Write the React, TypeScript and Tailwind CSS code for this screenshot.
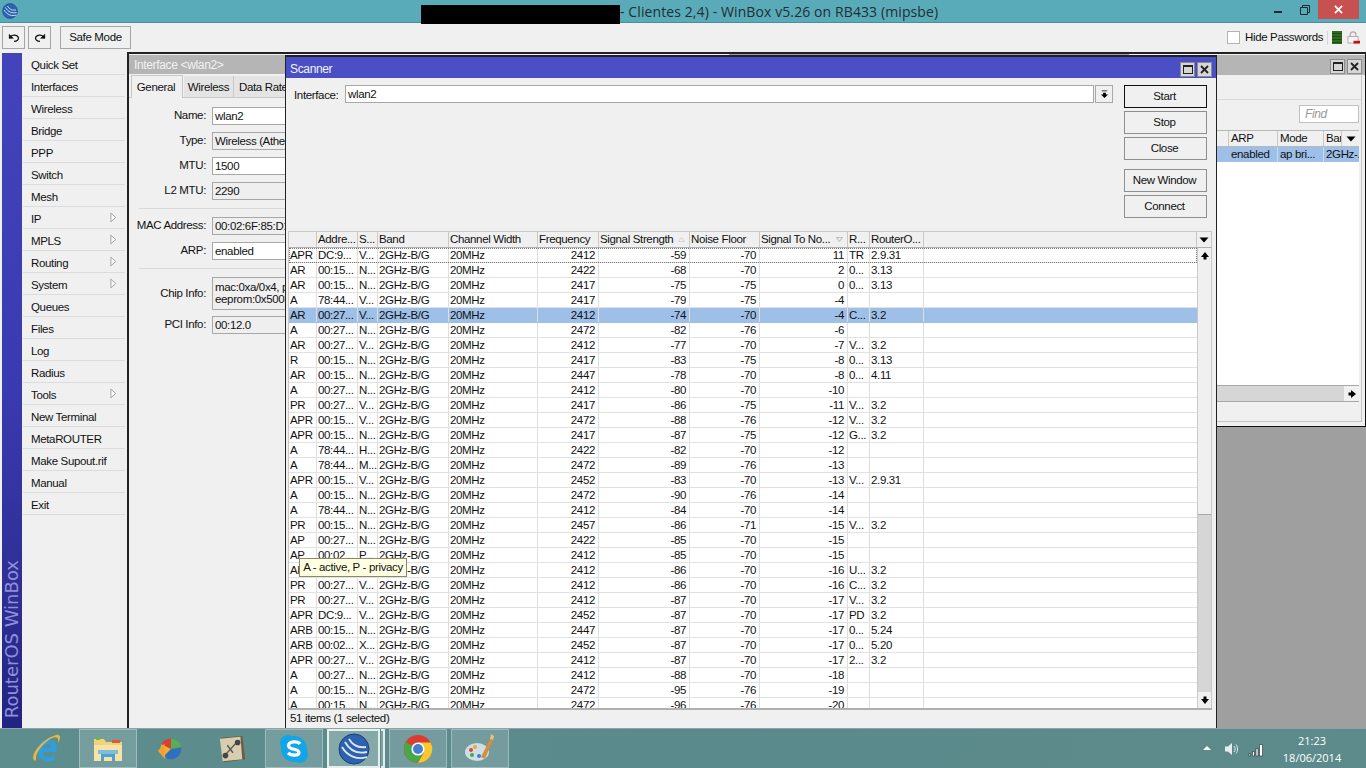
import React from "react";

const menu: [string, boolean][] = [
  ["Quick Set", false], ["Interfaces", false], ["Wireless", false], ["Bridge", false], ["PPP", false], ["Switch", false], ["Mesh", false], ["IP", true], ["MPLS", true], ["Routing", true], ["System", true], ["Queues", false], ["Files", false], ["Log", false], ["Radius", false], ["Tools", true], ["New Terminal", false], ["MetaROUTER", false], ["Make Supout.rif", false], ["Manual", false], ["Exit", false],
];

const rows: string[][] = [
  ["APR", "DC:9...", "V...", "2412", "-59", "-70", "11", "TR", "2.9.31"],
  ["AR", "00:15...", "N...", "2422", "-68", "-70", "2", "0...", "3.13"],
  ["AR", "00:15...", "N...", "2417", "-75", "-75", "0", "0...", "3.13"],
  ["A", "78:44...", "V...", "2417", "-79", "-75", "-4", "", ""],
  ["AR", "00:27...", "V...", "2412", "-74", "-70", "-4", "C...", "3.2"],
  ["A", "00:27...", "N...", "2472", "-82", "-76", "-6", "", ""],
  ["AR", "00:27...", "V...", "2412", "-77", "-70", "-7", "V...", "3.2"],
  ["R", "00:15...", "N...", "2417", "-83", "-75", "-8", "0...", "3.13"],
  ["AR", "00:15...", "N...", "2447", "-78", "-70", "-8", "0...", "4.11"],
  ["A", "00:27...", "N...", "2412", "-80", "-70", "-10", "", ""],
  ["PR", "00:27...", "V...", "2417", "-86", "-75", "-11", "V...", "3.2"],
  ["APR", "00:15...", "V...", "2472", "-88", "-76", "-12", "V...", "3.2"],
  ["APR", "00:15...", "N...", "2417", "-87", "-75", "-12", "G...", "3.2"],
  ["A", "78:44...", "H...", "2422", "-82", "-70", "-12", "", ""],
  ["A", "78:44...", "M...", "2472", "-89", "-76", "-13", "", ""],
  ["APR", "00:15...", "V...", "2452", "-83", "-70", "-13", "V...", "2.9.31"],
  ["A", "00:15...", "N...", "2472", "-90", "-76", "-14", "", ""],
  ["A", "78:44...", "N...", "2412", "-84", "-70", "-14", "", ""],
  ["PR", "00:15...", "N...", "2457", "-86", "-71", "-15", "V...", "3.2"],
  ["AP", "00:27...", "N...", "2422", "-85", "-70", "-15", "", ""],
  ["AP", "00:02...", "P...", "2412", "-85", "-70", "-15", "", ""],
  ["AR", "00:27...", "V...", "2412", "-86", "-70", "-16", "U...", "3.2"],
  ["PR", "00:27...", "V...", "2412", "-86", "-70", "-16", "C...", "3.2"],
  ["PR", "00:27...", "V...", "2412", "-87", "-70", "-17", "V...", "3.2"],
  ["APR", "DC:9...", "V...", "2452", "-87", "-70", "-17", "PD", "3.2"],
  ["ARB", "00:15...", "N...", "2447", "-87", "-70", "-17", "0...", "5.24"],
  ["ARB", "00:02...", "X...", "2452", "-87", "-70", "-17", "0...", "5.20"],
  ["APR", "00:27...", "V...", "2412", "-87", "-70", "-17", "2...", "3.2"],
  ["A", "00:27...", "N...", "2412", "-88", "-70", "-18", "", ""],
  ["A", "00:15...", "N...", "2472", "-95", "-76", "-19", "", ""],
  ["A", "00:15...", "N...", "2472", "-96", "-76", "-20", "", ""],
];

function Cell({ w, right, head, children }: { w: string; right?: boolean; head?: boolean; children?: React.ReactNode }) {
  return (
    <div className={`${w} shrink-0 h-full overflow-hidden whitespace-nowrap pl-[1px] pr-[3px] border-r ${head ? "border-[#c8c8c8] leading-[15px]" : "border-[#dedede] leading-[14px]"} ${right ? "text-right" : ""}`}>
      {children}
    </div>
  );
}

function Row({ r, i }: { r: string[]; i: number }) {
  const sel = i === 4;
  return (
    <div className={`flex h-[15px] shrink-0 border-b ${sel ? "bg-[#9dbfe8] border-[#9dbfe8]" : "bg-white border-[#e2e2e2]"} ${i === 0 ? "outline-1 outline-dotted outline-[#777] -outline-offset-1" : ""}`}>
      <Cell w="w-[28px]">{r[0]}</Cell>
      <Cell w="w-[41px]">{r[1]}</Cell>
      <Cell w="w-[20px]">{r[2]}</Cell>
      <Cell w="w-[71px]">2GHz-B/G</Cell>
      <Cell w="w-[89px]">20MHz</Cell>
      <Cell w="w-[61px]" right>{r[3]}</Cell>
      <Cell w="w-[91px]" right>{r[4]}</Cell>
      <Cell w="w-[70px]" right>{r[5]}</Cell>
      <Cell w="w-[88px]" right>{r[6]}</Cell>
      <Cell w="w-[22px]">{r[7]}</Cell>
      <Cell w="w-[54px]">{r[8]}</Cell>
      <div className="flex-1" />
    </div>
  );
}

function Tri({ dir, className }: { dir: "up" | "down" | "right" | "solid"; className?: string }) {
  const p =
    dir === "up" ? "M5 1 9 6H6.5V8.5H3.5V6H1Z"
    : dir === "down" ? "M3.5 1.5H6.5V4H9L5 9 1 4H3.5Z"
    : dir === "solid" ? "M.5 2.5H9.500L5 7.500Z"
    : "M1.5 3.5H4V1L9 5 4 9V6.5H1.5Z";
  return <svg viewBox="0 0 10 10" className={`w-[10px] h-[10px] ${className ?? ""}`}><path d={p} fill="#000" /></svg>;
}

function WinButtons() {
  return (
    <div className="flex gap-[2px] items-center">
      <div className="w-[15px] h-[15px] bg-[#d6d6d6] border border-[#8c8c8c] flex items-center justify-center"><div className="w-[10px] h-[9px] border border-[#222] border-t-2" /></div>
      <div className="w-[15px] h-[15px] bg-[#d6d6d6] border border-[#8c8c8c] flex items-center justify-center">
        <svg viewBox="0 0 9 9" className="w-[9px] h-[9px]"><path d="M1 1 8 8M8 1 1 8" stroke="#222" strokeWidth="1.8" /></svg>
      </div>
    </div>
  );
}

function Btn({ label, active, className }: { label: string; active?: boolean; className?: string }) {
  return (
    <div className={`w-[83px] h-[23px] flex items-center justify-center pt-px pr-[2px] bg-[#f0f0f0] border ${active ? "border-[#111]" : "border-[#8f8f8f]"} ${className ?? ""}`}>{label}</div>
  );
}

function Field({ label, value, h, grey, lines }: { label: string; value?: string; h?: string; grey?: boolean; lines?: string[] }) {
  return (
    <div className={`flex items-center ${h ?? "h-[18px]"}`}>
      <div className="w-[77px] text-right pr-[6px] whitespace-nowrap">{label}</div>
      <div className={`flex-1 h-full border border-[#a8a8a8] px-[2px] overflow-hidden whitespace-nowrap ${grey ? "bg-[#efefef]" : "bg-white"} leading-[16px]`}>
        {lines ? lines.map((l) => <div key={l} className="leading-[12px] first:mt-[3px]">{l}</div>) : value}
      </div>
    </div>
  );
}

function Arrow() {
  return <svg viewBox="0 0 8 12" className="absolute right-[8px] top-[5px] w-[7px] h-[11px]"><path d="M1 1 6.5 6 1 11Z" fill="#fafafa" stroke="#9a9a9a" /></svg>;
}

function TaskSlot({ boxed, children }: { boxed?: boolean; children: React.ReactNode }) {
  return (
    <div className={`w-[58px] h-[39px] flex items-center justify-center ${boxed ? "bg-white/15 border border-white/30" : ""}`}>
      {children}
    </div>
  );
}

function WinboxLogo({ size }: { size: number }) {
  return (
    <svg viewBox="0 0 32 32" width={size} height={size}>
      <circle cx="16" cy="16" r="15" fill="#2c62b0" stroke="#1d3f78" />
      <path d="M4 14C10 24 20 27 29 24M7 9C12 18 20 21 29 19M11 6C15 13 21 15 28 14" fill="none" stroke="#dfe9f6" strokeWidth="1.8" />
    </svg>
  );
}

export default function App() {
  return (
    <div className="w-[1366px] h-[768px] overflow-hidden flex flex-col font-['Liberation_Sans',Arial,sans-serif] text-[11.5px] tracking-[-0.35px] text-[#111] bg-[#f0f0f0]">
      {/* Title bar */}
      <div className="h-[23px] shrink-0 bg-[#5aabb9] border-b border-[#4a8e99] flex items-center relative">
        <div className="ml-[2px] w-[16px] h-[16px]"><WinboxLogo size={16} /></div>
        <div className="absolute left-[421px] top-[5px] w-[199px] h-[19px] bg-black" />
        <div className="absolute left-[620px] top-[2px] text-[14px] leading-[20px] tracking-[0.1px] font-['Open_Sans',sans-serif] text-[#1d2f33] whitespace-nowrap">- Clientes 2,4) - WinBox v5.26 on RB433 (mipsbe)</div>
        <div className="absolute left-[1274px] top-[11px] w-[8px] h-[2px] bg-[#1a2c30]" />
        <svg viewBox="0 0 10 10" className="absolute left-[1300px] top-[5px] w-[10px] h-[10px]"><path d="M2.5 2.5V.5H9.5V7.5H7.5M.5 2.5H7.5V9.5H.5Z" fill="none" stroke="#1a2c30" /></svg>
        <div className="absolute left-[1318px] top-0 w-[41px] h-[19px] bg-[#c75050] flex items-center justify-center">
          <svg viewBox="0 0 10 10" className="w-[9px] h-[9px]"><path d="M1 1 9 9M9 1 1 9" stroke="#fff" strokeWidth="2" /></svg>
        </div>
      </div>

      {/* Toolbar */}
      <div className="h-[29px] shrink-0 flex items-center pl-[2px] pr-[6px] bg-[#f0f0f0]">
        <div className="w-[23px] h-[23px] border border-[#a6a6a6] flex items-center justify-center">
          <svg viewBox="0 0 14 11" className="w-[12px] h-[10px]"><path d="M1 .5V6.500L7 6Z" fill="#111" /><path d="M3 4C5 1.500 10 1.500 12 4.500C13 7 10.500 9.500 7 9.500" fill="none" stroke="#111" strokeWidth="1.5" /></svg>
        </div>
        <div className="w-[23px] h-[23px] ml-[3px] border border-[#a6a6a6] flex items-center justify-center">
          <svg viewBox="0 0 14 11" className="w-[12px] h-[10px] -scale-x-100"><path d="M1 .5V6.500L7 6Z" fill="#111" /><path d="M3 4C5 1.500 10 1.500 12 4.500C13 7 10.500 9.500 7 9.500" fill="none" stroke="#111" strokeWidth="1.5" /></svg>
        </div>
        <div className="w-[71px] h-[23px] ml-[9px] border border-[#a6a6a6] flex items-center justify-center">Safe Mode</div>
        <div className="flex-1" />
        <div className="w-[13px] h-[13px] bg-white border border-[#b4b4b4] mr-[5px]" />
        <div className="whitespace-nowrap w-[77px]">Hide Passwords</div>
        <div className="w-px h-[14px] bg-[#d8d8d8] ml-[5px] mr-[4px]" />
        <div className="w-[10px] h-[13px] bg-[repeating-linear-gradient(#2f6b1e_0_2px,#1f4d14_2px_3px)] mr-[5px]" />
        <svg viewBox="0 0 14 15" className="w-[13px] h-[15px]"><path d="M3.5 7V4C3.5 .5 9.5 .5 9.5 4V7" fill="none" stroke="#aaa" strokeWidth="1.3" /><rect x="1" y="6.5" width="11" height="7" fill="#f4f4f4" stroke="#aaa" /><rect x="7" y="11" width="7" height="3" fill="#c81010" /></svg>
      </div>

      {/* Main */}
      <div className="flex-1 flex min-h-0">
        <div className="w-[127px] shrink-0 flex pl-[2px] pt-px">
          <div className="w-[20px] h-full bg-[linear-gradient(#4343bb,#3a3ab0_50%,#2c2c90_85%,#232382)] flex flex-col justify-end items-center overflow-hidden">
            <div className="[writing-mode:vertical-rl] rotate-180 font-['DejaVu_Sans',sans-serif] text-[18px] tracking-normal leading-[20px] text-[#9090da] whitespace-nowrap pt-[10px]">RouterOS WinBox</div>
          </div>
          <div className="w-[102px] ml-px">
            {menu.map(([m, a]) => (
              <div key={m} className="relative h-[22px] border-b border-[#dcdcdc] pl-[8px] pt-[2px] leading-[20px] whitespace-nowrap">
                {m}
                {a && <Arrow />}
              </div>
            ))}
          </div>
        </div>

        <div className="relative flex-1 bg-[#9f9f9f] border-l-2 border-t-2 border-[#222]">
          {/* Interface list window (behind) */}
          <div className="absolute left-[1000px] top-0 right-0 h-[373px] bg-[#f0f0f0] border-r border-b border-[#111] pt-px flex flex-col">
            <div className="h-[20px] bg-[#b5b5b5] flex items-center justify-end pr-[3px] pt-[2px] shrink-0"><WinButtons /></div>
            <div className="flex-1 min-h-0 flex flex-col mr-[3px] mb-[4px] border-r border-b border-[#c4c4c4]">
              <div className="h-[25px] shrink-0 border-b border-[#d8d8d8]" />
              <div className="h-[30px] shrink-0 flex justify-end items-start pr-[2px] pt-[5px]">
                <div className="w-[60px] h-[18px] bg-white border border-[#c0c0c0] italic text-[#9a9a9a] px-[5px] text-[12px] leading-[16px]">Find</div>
              </div>
              <div className="ml-[3px] mr-[2px] flex-1 flex flex-col bg-white min-h-0">
                <div className="h-[17px] shrink-0 flex bg-[#f0f0f0] border-y border-[#b8b8b8]">
                  <div className="w-[97px] shrink-0 border-r border-[#c8c8c8]" />
                  <Cell w="w-[49px]" head><span className="ml-px">ARP</span></Cell>
                  <Cell w="w-[46px]" head><span className="ml-px">Mode</span></Cell>
                  <Cell w="w-[18px]" head><span className="ml-px">Bar</span></Cell>
                  <div className="flex-1 flex items-center justify-center"><Tri dir="solid" /></div>
                </div>
                <div className="h-[15px] shrink-0 flex bg-[#9dbfe8] leading-[14px]">
                  <div className="w-[97px] shrink-0" />
                  <div className="w-[49px] shrink-0 pl-[2px] border-r border-[#c9dbf2]">enabled</div>
                  <div className="w-[46px] shrink-0 pl-[2px] border-r border-[#c9dbf2] whitespace-nowrap">ap bri...</div>
                  <div className="flex-1 pl-[2px] overflow-hidden whitespace-nowrap">2GHz-.</div>
                </div>
                <div className="flex-1" />
                <div className="h-[17px] shrink-0 flex justify-end bg-[#d6d6d6] border-y border-[#a8a8a8]">
                  <div className="w-[15px] bg-[#f0f0f0] flex items-center justify-center"><Tri dir="right" /></div>
                </div>
              </div>
              <div className="h-[19px] shrink-0" />
            </div>
          </div>

          {/* Interface <wlan2> window */}
          <div className="absolute left-0 top-0 w-[600px] bottom-0 bg-[#f0f0f0] pt-px">
            <div className="h-[19px] bg-[#b5b5b5] text-[#f2f2f2] pl-[5px] leading-[20px] text-[12px]">Interface &lt;wlan2&gt;</div>
            <div className="flex h-[24px] pl-[2px] items-end border-b border-[#c8c8c8]">
              <div className="w-[52px] h-[23px] bg-[#f0f0f0] border border-[#c8c8c8] border-b-0 text-center pr-[2px] leading-[23px] -mb-px">General</div>
              <div className="w-[50px] ml-px h-[21px] bg-[#e4e4e4] border-r border-[#c8c8c8] text-center leading-[23px]">Wireless</div>
              <div className="w-[70px] h-[21px] bg-[#e4e4e4] pl-[5px] leading-[23px] whitespace-nowrap">Data Rates</div>
            </div>
            <div className="w-[290px] pl-[6px] pt-[9px] flex flex-col">
              <Field label="Name:" value="wlan2" />
              <div className="h-[7px]" />
              <Field label="Type:" value="Wireless (Atheros AR5413)" grey />
              <div className="h-[7px]" />
              <Field label="MTU:" value="1500" />
              <div className="h-[7px]" />
              <Field label="L2 MTU:" value="2290" grey />
              <div className="h-[9px] border-b border-[#d8d8d8] ml-[4px]" />
              <div className="h-[8px]" />
              <Field label="MAC Address:" value="00:02:6F:85:D1:00" grey />
              <div className="h-[7px]" />
              <Field label="ARP:" value="enabled" />
              <div className="h-[9px] border-b border-[#d8d8d8] ml-[4px]" />
              <div className="h-[8px]" />
              <Field label="Chip Info:" h="h-[33px]" grey lines={["mac:0xa/0x4, phy:0x61", "eeprom:0x5003"]} />
              <div className="h-[6px]" />
              <Field label="PCI Info:" value="00:12.0" grey />
            </div>
          </div>

          {/* Scanner window */}
          <div className="absolute left-[156px] top-px w-[932px] bottom-0 bg-[#f0f0f0] border border-t-2 border-b-0 border-[#222] flex flex-col">
            <div className="h-[21px] shrink-0 bg-[#4b4fc6] text-[#f2f2f2] flex items-center justify-between pl-[4px] pr-[4px] pt-[3px] text-[12px]">
              <span>Scanner</span>
              <WinButtons />
            </div>
            <div className="h-[153px] shrink-0 flex pl-[8px] pt-[7px]">
              <div className="pt-[2px] w-[51px] whitespace-nowrap">Interface:</div>
              <div className="w-[749px] h-[18px] bg-white border border-[#a8a8a8] px-[2px] leading-[17px]">wlan2</div>
              <div className="w-[18px] h-[18px] ml-[1px] border border-[#a8a8a8] flex items-center justify-center">
                <svg viewBox="0 0 10 10" className="w-[9px] h-[9px]"><path d="M2 .5H8V1.5H2ZM3.5 3H6.5V5H9L5 9 1 5H3.5Z" fill="#000" /></svg>
              </div>
              <div className="ml-[11px] flex flex-col gap-[3px]">
                <Btn label="Start" active />
                <Btn label="Stop" />
                <Btn label="Close" />
                <Btn label="New Window" className="mt-[6px]" />
                <Btn label="Connect" />
              </div>
            </div>
            <div className="flex-1 min-h-0 flex flex-col pl-[2px] pr-[4px]">
              <div className="h-[17px] shrink-0 flex bg-[#f0f0f0] border border-[#c8c8c8] border-b-[#b0b0b0]">
                <Cell w="w-[28px]" head />
                <Cell w="w-[41px]" head>Addre...</Cell>
                <Cell w="w-[20px]" head>S...</Cell>
                <Cell w="w-[71px]" head>Band</Cell>
                <Cell w="w-[89px]" head>Channel Width</Cell>
                <Cell w="w-[61px]" head>Frequency</Cell>
                <Cell w="w-[91px]" head>
                  <span className="flex justify-between items-center pr-[1px]">Signal Strength<svg viewBox="0 0 8 6" className="w-[7px] h-[5px]"><path d="M4 .5 7.5 5.5H.5Z" fill="none" stroke="#ccc" /></svg></span>
                </Cell>
                <Cell w="w-[70px]" head>Noise Floor</Cell>
                <Cell w="w-[88px]" head>
                  <span className="flex justify-between items-center pr-[1px]">Signal To No...<svg viewBox="0 0 8 6" className="w-[7px] h-[5px]"><path d="M4 5.5 7.5 .5H.5Z" fill="none" stroke="#aaa" /></svg></span>
                </Cell>
                <Cell w="w-[22px]" head>R...</Cell>
                <Cell w="w-[54px]" head>RouterO...</Cell>
                <div className="flex-1" />
                <div className="w-[15px] border-l border-[#c8c8c8] flex items-center justify-center"><Tri dir="solid" /></div>
              </div>
              <div className="flex-1 min-h-0 flex relative">
                <div className="flex-1 min-w-0 overflow-hidden flex flex-col border-l border-[#c8c8c8]">
                  {rows.map((r, i) => <Row key={i} r={r} i={i} />)}
                </div>
                <div className="w-[15px] shrink-0 flex flex-col border-x border-[#c8c8c8] bg-[#d6d6d6]">
                  <div className="h-[15px] bg-[#f0f0f0] flex items-center justify-center"><Tri dir="up" /></div>
                  <div className="h-[252px] bg-[#f0f0f0] border-b border-[#a8a8a8]" />
                  <div className="flex-1" />
                  <div className="h-[16px] bg-[#f0f0f0] flex items-center justify-center"><Tri dir="down" /></div>
                </div>
                <div className="absolute left-[11px] top-[310px] w-[108px] h-[19px] bg-[#ffffe1] border border-[#8a8a6a] text-center leading-[16px] whitespace-nowrap">A - active, P - privacy</div>
              </div>
              <div className="h-[20px] shrink-0 border-t-2 border-[#b0b0b0] pl-[2px] leading-[17px]">51 items (1 selected)</div>
            </div>
          </div>
        </div>
      </div>

      {/* Taskbar */}
      <div className="h-[40px] shrink-0 flex items-center pl-[17px] gap-[4px] bg-[linear-gradient(100deg,#5e8d8e,#5b8a8c_50%,#5d8b8c)] border-t border-[#8aa5a6] relative font-['Open_Sans',sans-serif] tracking-normal">
        <TaskSlot>
          <svg viewBox="0 0 32 32" className="w-[32px] h-[32px]">
            <path d="M8 18C8 9 14 6 20 7C26 8 27 13 27 19H13C13 25 20 26 25 22V27C15 31 8 26 8 18Z M13 15H22C22 10 14 10 13 15Z" fill="#2d9fe0" fillRule="evenodd" />
            <path d="M4 27C0 22 12 6 26 2C31 1 31 6 28 10C29 5 27 3 22 5C14 9 5 20 6 26C6 28 5 28 4 27Z" fill="#e8b93a" />
          </svg>
        </TaskSlot>
        <TaskSlot boxed>
          <svg viewBox="0 0 32 28" className="w-[32px] h-[28px]">
            <path d="M2 4H12L14 7H30V26H2Z" fill="#f3d27a" />
            <rect x="4" y="2" width="4" height="3" fill="#66b84a" />
            <rect x="20" y="5" width="8" height="3" fill="#e05a3a" />
            <path d="M2 10H30V26H2Z" fill="#f8e3a6" />
            <path d="M9 26V19H23V26H20V22H12V26Z" fill="#4f9fd0" />
            <rect x="6" y="15" width="20" height="4" fill="#7dbde0" />
          </svg>
        </TaskSlot>
        <TaskSlot>
          <svg viewBox="0 0 32 32" className="w-[30px] h-[30px]">
            <circle cx="17" cy="16" r="11" fill="#2f6fc0" />
            <path d="M17 5A11 11 0 0 0 7 11L17 16Z" fill="#e23b30" />
            <path d="M7 11A11 11 0 0 0 9 24L17 16Z" fill="#f0b030" />
            <path d="M17 5A11 11 0 0 1 28 14L17 16Z" fill="#58b050" />
            <path d="M3 18 10 10 11 27Z" fill="#f2a030" />
          </svg>
        </TaskSlot>
        <TaskSlot>
          <svg viewBox="0 0 32 32" className="w-[30px] h-[30px]">
            <path d="M4 4 27 2 30 27 7 30Z" fill="#6e5a3e" />
            <path d="M3 5 25 3 27 27 6 29Z" fill="#d8cdb0" />
            <path d="M9 22 20 10M11 12 17 20" stroke="#555" strokeWidth="1.5" />
            <circle cx="22" cy="9" r="3" fill="#444" />
            <circle cx="9" cy="23" r="3" fill="#444" />
          </svg>
        </TaskSlot>
        <TaskSlot boxed>
          <svg viewBox="0 0 32 32" className="w-[32px] h-[32px]">
            <circle cx="10" cy="10" r="8" fill="#12a5e8" /><circle cx="22" cy="22" r="8" fill="#12a5e8" /><circle cx="16" cy="16" r="13" fill="#12a5e8" />
            <path d="M22 11C20 8 11 8 10.500 12.500C10.500 17.500 21 15 21 19.500C21 23 13 23 10 20" fill="none" stroke="#fff" strokeWidth="3.2" />
          </svg>
        </TaskSlot>
        <div className="w-[58px] h-[39px] flex">
          <div className="w-[53px] h-full bg-white/25 border-2 border-white/80 flex items-center justify-center"><WinboxLogo size={32} /></div>
          <div className="w-[4px] ml-px h-full border-r-2 border-y-2 border-white/80 bg-white/20" />
        </div>
        <TaskSlot boxed>
          <svg viewBox="0 0 32 32" className="w-[30px] h-[30px]">
            <circle cx="16" cy="16" r="15" fill="#dd3b30" />
            <path d="M16 16 3 23.500A15 15 0 0 1 3 8.500Z" fill="#dd3b30" />
            <path d="M16 16 3 8.500A15 15 0 0 0 16 31L23 18Z" fill="#4aa648" />
            <path d="M16 9H29.500A15 15 0 0 1 16 31L22.500 19.500Z" fill="#f7c92f" />
            <circle cx="16" cy="16" r="7" fill="#fff" /><circle cx="16" cy="16" r="5.300" fill="#3f80cf" />
          </svg>
        </TaskSlot>
        <TaskSlot boxed>
          <svg viewBox="0 0 32 32" className="w-[32px] h-[32px]">
            <ellipse cx="13" cy="19" rx="12" ry="9" fill="#cfdde6" />
            <circle cx="7" cy="17" r="2" fill="#d24a3a" /><circle cx="11" cy="14" r="2" fill="#e0b030" /><circle cx="8" cy="22" r="2" fill="#4aa648" /><circle cx="15" cy="23" r="2" fill="#3f80cf" />
            <path d="M17 24 26 6 29 7 21 26Z" fill="#d49040" />
            <path d="M26 6 27 1 30 3 29 7Z" fill="#e8c080" />
          </svg>
        </TaskSlot>
        <div className="absolute left-[1203px] top-[17px] w-0 h-0 border-x-[4px] border-x-transparent border-b-[4px] border-b-white" />
        <svg viewBox="0 0 16 16" className="absolute left-[1224px] top-[12px] w-[16px] h-[16px]"><path d="M1 5.500H4L8 2V14L4 10.500H1Z" fill="#e8eef0" /><path d="M10 5C11.500 7 11.500 9 10 11M12 3.500C14 6 14 10 12 12.500" fill="none" stroke="#e8eef0" /></svg>
        <svg viewBox="0 0 16 14" className="absolute left-[1248px] top-[14px] w-[16px] h-[14px]"><path d="M1 10.500H2.500V13H1ZM4.500 8.500H6.500V13H4.500ZM8 5.500H10V13H8ZM11.500 1.500H14.500V13H11.500Z" fill="#fff" stroke="#1c2a2c" strokeWidth=".6" /></svg>
        <div className="absolute left-[1277px] w-[70px] top-[3px] text-center text-white text-[11px] leading-[17px]">
          <div>21:23</div>
          <div>18/06/2014</div>
        </div>
      </div>
    </div>
  );
}
